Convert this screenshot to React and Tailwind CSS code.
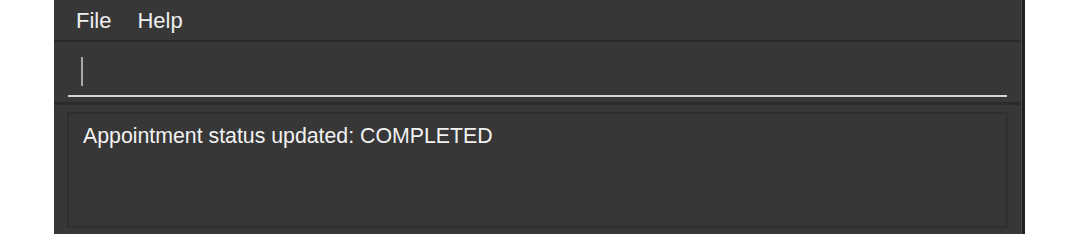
export default function App() {
  return (
    <div className="w-[1080px] h-[234px] bg-white flex overflow-hidden" style={{ fontFamily: '"Liberation Sans", Arial, sans-serif' }}>
      <div className="w-[54px] shrink-0" />
      <div className="w-[968px] h-full bg-[#373737] flex flex-col border-r border-[#4a4a4a]">
        {/* menu bar */}
        <div className="h-[42px] shrink-0 flex items-start gap-[26px] px-[22px] pt-[8px] border-b-2 border-[#2b2b2b] text-[22px] leading-[26px] text-[#eeeeee]">
          <span>File</span>
          <span>Help</span>
        </div>
        {/* command box */}
        <div className="h-[63px] shrink-0 px-[14px] flex flex-col border-b-[3px] border-[#2b2b2b]">
          <div className="flex-1 flex items-center pl-[13px] pt-[6px]">
            <div className="w-[2px] h-[29px] bg-[#a8a8a8]" />
          </div>
          <div className="h-[2px] bg-[#d4d4d4] mb-[5px]" />
        </div>
        {/* result display */}
        <div className="flex-1 px-[13px] pt-[7px] pb-[6px]">
          <div className="h-full border-2 border-[#2f2f2f] pl-[14px] pt-[9px] text-[21.3px] leading-[26px] text-[#f2f2f2]">
            Appointment status updated: COMPLETED
          </div>
        </div>
      </div>
      <div className="w-[3px] shrink-0 bg-[#1f1f1f]" />
    </div>
  );
}
